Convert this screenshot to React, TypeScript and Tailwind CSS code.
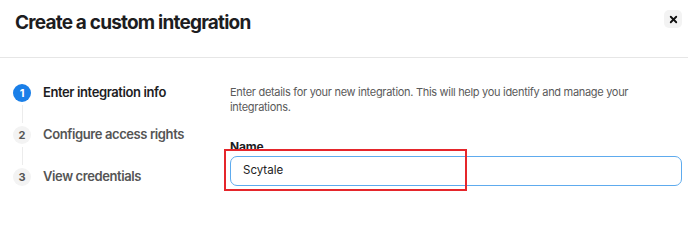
import { X } from "lucide-react"

const steps = [
  { n: 1, label: "Enter integration info", active: true },
  { n: 2, label: "Configure access rights", active: false },
  { n: 3, label: "View credentials", active: false },
]

export default function App() {
  return (
    <div className="w-[688px] h-[251px] bg-white text-[#1d1d1f] overflow-hidden" style={{ fontFamily: "Inter, 'Noto Sans', sans-serif" }}>
      {/* header */}
      <div className="h-[58px] flex items-start justify-between pl-[15px] pr-[6px] pt-[10px] border-b border-[#e6e6e6]">
        <h1 className="text-[19px] font-bold tracking-[-0.8px] leading-[26px]">Create a custom integration</h1>
        <button className="w-[18px] h-[18px] rounded-[5px] bg-[#f3f3f3] flex items-center justify-center">
          <X className="w-[11px] h-[11px] text-[#111]" strokeWidth={4} />
        </button>
      </div>

      <div className="flex pt-[23px]">
        {/* steps */}
        <div className="w-[230px] pl-[13px] flex flex-col">
          {steps.map((s, i) => (
            <div key={s.n} className="flex flex-col">
              <div className="flex items-center gap-[12px] h-[24px]">
                <span
                  className={
                    s.active
                      ? "w-[18px] h-[18px] rounded-full bg-[#1a7fe8] text-white text-[11px] font-bold flex items-center justify-center"
                      : "w-[18px] h-[18px] rounded-full bg-[#f3f3f3] text-[#555] text-[11px] font-bold flex items-center justify-center"
                  }
                >
                  {s.n}
                </span>
                <span
                  className={
                    s.active
                      ? "text-[13px] font-semibold tracking-[-0.4px] text-[#1d1d1f]"
                      : "text-[13px] font-semibold tracking-[-0.4px] text-[#555]"
                  }
                >
                  {s.label}
                </span>
              </div>
              {i < steps.length - 1 && <div className="ml-[8.5px] w-px h-[18px] bg-[#ececec]" />}
            </div>
          ))}
        </div>

        {/* form */}
        <div className="flex-1 pr-[6px]">
          <p className="max-w-[410px] text-[11px] leading-[14.5px] tracking-[-0.3px] text-[#5a5a5a] pt-[4px]">
            Enter details for your new integration. This will help you identify and manage your integrations.
          </p>
          <label className="block mt-[26px] text-[12px] font-bold tracking-[-0.2px] text-[#1d1d1f] leading-[14px]">Name</label>
          <div className="relative mt-[2px]">
            <div className="h-[30px] rounded-[7px] border-[1.5px] border-[#5eabee] flex items-center pl-[12px] text-[11.5px] text-[#222]">
              Scytale
            </div>
            <div className="absolute left-[-6px] top-[-7px] w-[243px] h-[42px] border-[2.5px] border-[#e5262b]" />
          </div>
        </div>
      </div>
    </div>
  )
}
